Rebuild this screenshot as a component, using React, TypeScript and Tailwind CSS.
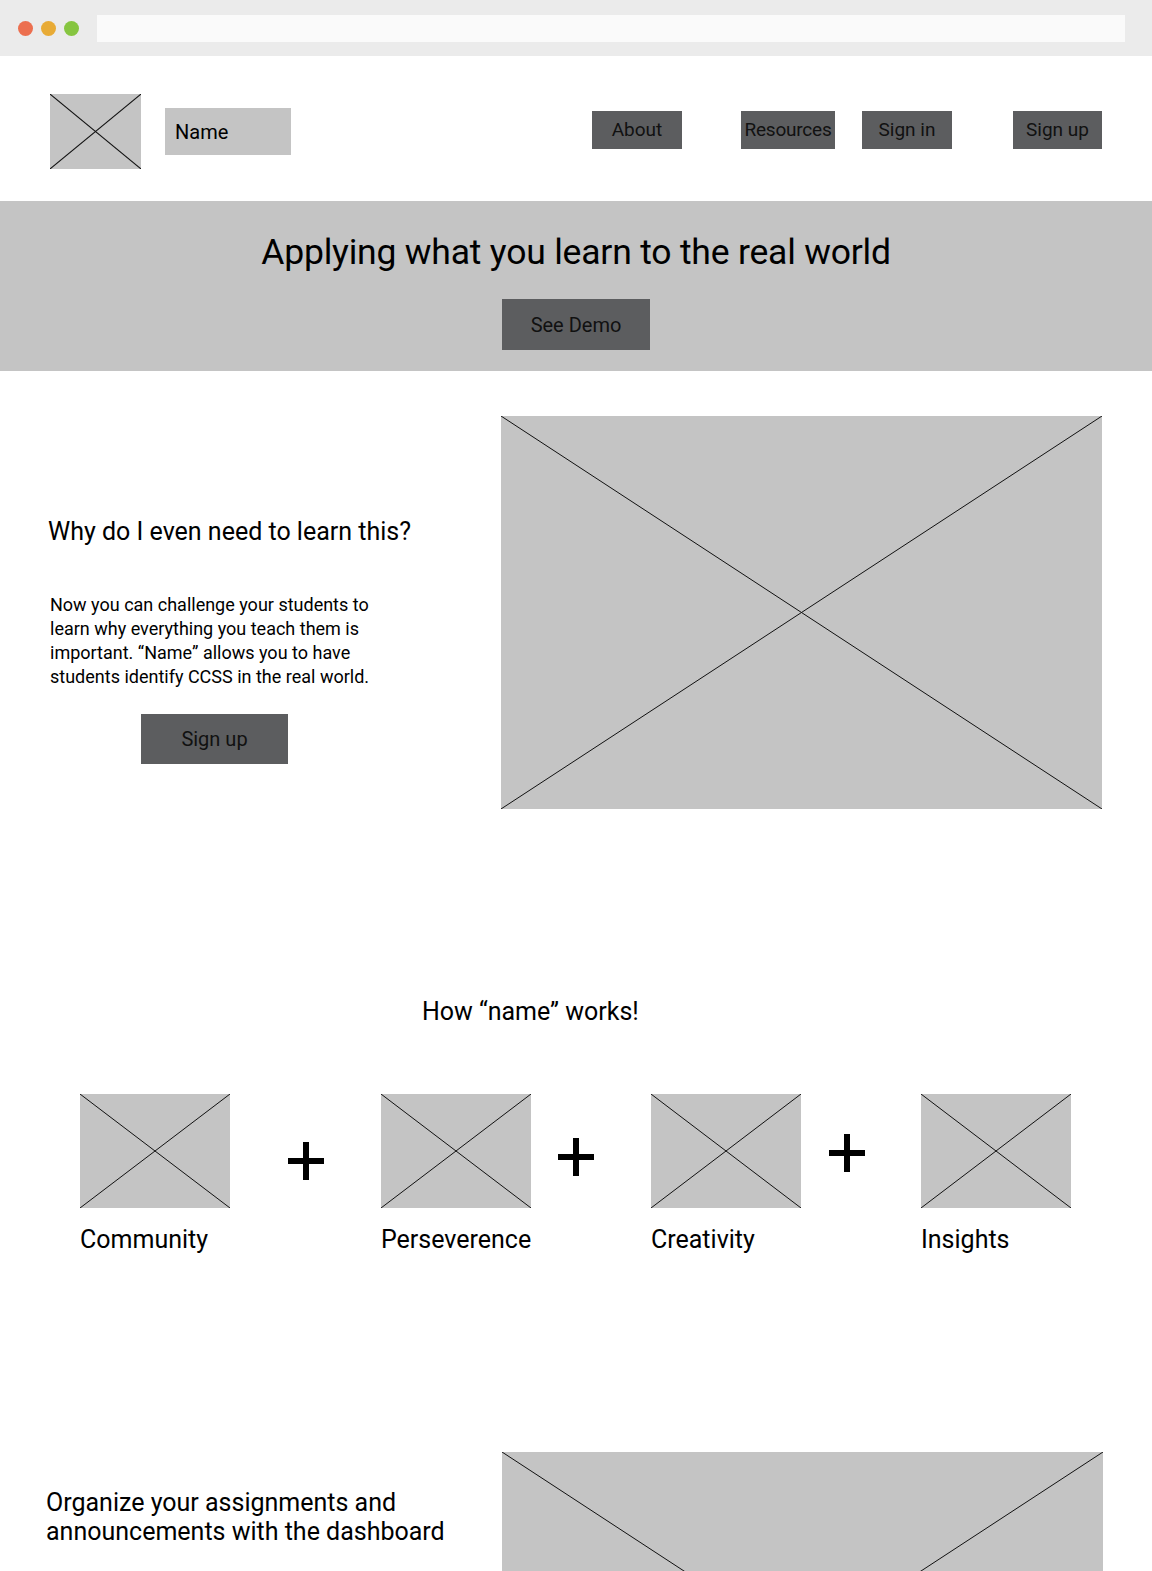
import React from 'react';

const Placeholder = ({ className }: { className: string }) => (
  <div className={`bg-[#c4c4c4] ${className}`}>
    <svg className="block h-full w-full" viewBox="0 0 100 100" preserveAspectRatio="none">
      <line x1="0" y1="0" x2="100" y2="100" stroke="#111" strokeWidth="1" vectorEffect="non-scaling-stroke" />
      <line x1="0" y1="100" x2="100" y2="0" stroke="#111" strokeWidth="1" vectorEffect="non-scaling-stroke" />
    </svg>
  </div>
);

const Plus = ({ className }: { className: string }) => (
  <svg className={className} width="36" height="38" viewBox="0 0 36 38">
    <rect x="0" y="16" width="36" height="6" fill="#000" />
    <rect x="15" y="0" width="6" height="38" fill="#000" />
  </svg>
);

const DarkButton = ({ label, className }: { label: string; className: string }) => (
  <button className={`flex items-center justify-center bg-[#5c5d5f] text-[#111] ${className}`}>{label}</button>
);

const features = ['Community', 'Perseverence', 'Creativity', 'Insights'];

export default function App() {
  return (
    <div className="w-[1152px] bg-white font-['Roboto',sans-serif] text-black">
      {/* Browser chrome */}
      <div className="flex h-[56px] items-center bg-[#ebebeb] pl-[18px]">
        <span className="h-[15px] w-[15px] rounded-full bg-[#ec6f4f]" />
        <span className="ml-[8px] h-[15px] w-[15px] rounded-full bg-[#e8ab36]" />
        <span className="ml-[8px] h-[15px] w-[15px] rounded-full bg-[#86c540]" />
        <div className="ml-[18px] h-[27px] w-[1028px] bg-[#fafafa]" />
      </div>

      {/* Header */}
      <header className="flex h-[145px] items-start">
        <Placeholder className="ml-[50px] mt-[38px] h-[75px] w-[91px]" />
        <div className="ml-[24px] mt-[52px] flex h-[47px] w-[126px] items-center bg-[#c4c4c4] pl-[10px] text-[20px]">
          Name
        </div>
        <nav className="mt-[55px] flex text-[19px]">
          <DarkButton label="About" className="ml-[301px] h-[38px] w-[90px]" />
          <DarkButton label="Resources" className="ml-[59px] h-[38px] w-[94px] tracking-[-0.2px]" />
          <DarkButton label="Sign in" className="ml-[27px] h-[38px] w-[90px]" />
          <DarkButton label="Sign up" className="ml-[61px] h-[38px] w-[89px]" />
        </nav>
      </header>

      {/* Hero */}
      <section className="flex h-[170px] flex-col items-center bg-[#c4c4c4]">
        <h1 className="mt-[29px] text-[35.5px] leading-[44px] tracking-[-0.2px]">
          Applying what you learn to the real world
        </h1>
        <DarkButton label="See Demo" className="mt-[25px] h-[51px] w-[148px] text-[20px]" />
      </section>

      {/* Why section */}
      <section className="flex pt-[45px]">
        <div className="w-[451px] pl-[48px]">
          <h2 className="mt-[100px] text-[25px] leading-[32px]">Why do I even need to learn this?</h2>
          <p className="ml-[2px] mt-[45px] w-[340px] text-[18px] leading-[24px]">
            Now you can challenge your students to learn why everything you teach them is important. “Name” allows
            you to have students identify CCSS in the real world.
          </p>
          <DarkButton label="Sign up" className="ml-[93px] mt-[25px] h-[50px] w-[147px] text-[20px]" />
        </div>
        <Placeholder className="ml-[50px] h-[393px] w-[601px]" />
      </section>

      {/* How it works */}
      <section className="pt-[187px]">
        <h2 className="pl-[422px] text-[25px] leading-[32px]">How “name” works!</h2>
        <div className="mt-[66px] flex items-start pl-[80px]">
          <div className="w-[150px]">
            <Placeholder className="h-[114px] w-[150px]" />
            <div className="mt-[16px] text-[25px] leading-[32px]">{features[0]}</div>
          </div>
          <Plus className="ml-[58px] mt-[48px]" />
          <div className="ml-[57px] w-[150px]">
            <Placeholder className="h-[114px] w-[150px]" />
            <div className="mt-[16px] text-[25px] leading-[32px]">{features[1]}</div>
          </div>
          <Plus className="ml-[27px] mt-[44px]" />
          <div className="ml-[57px] w-[150px]">
            <Placeholder className="h-[114px] w-[150px]" />
            <div className="mt-[16px] text-[25px] leading-[32px]">{features[2]}</div>
          </div>
          <Plus className="ml-[28px] mt-[40px]" />
          <div className="ml-[56px] w-[150px]">
            <Placeholder className="h-[114px] w-[150px]" />
            <div className="mt-[16px] text-[25px] leading-[32px]">{features[3]}</div>
          </div>
        </div>
      </section>

      {/* Dashboard */}
      <section className="flex pt-[196px]">
        <div className="w-[452px] pl-[46px]">
          <h2 className="mt-[36px] text-[25px] leading-[29px]">
            Organize your assignments and announcements with the dashboard
          </h2>
        </div>
        <Placeholder className="ml-[50px] h-[393px] w-[601px]" />
      </section>
    </div>
  );
}
